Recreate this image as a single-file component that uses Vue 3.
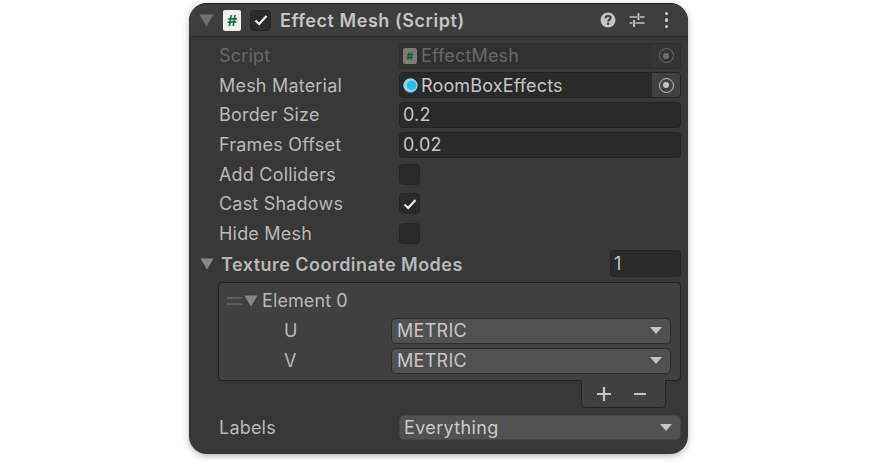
<script setup>
const checks = [
  { label: 'Add Colliders', checked: false },
  { label: 'Cast Shadows', checked: true },
  { label: 'Hide Mesh', checked: false }
]
</script>

<template>
  <div class="page">
    <div class="panel">
      <div class="header">
        <svg class="fold head-fold" width="15" height="13" viewBox="0 0 15 13"><path d="M0.5 0.5H14.5L7.5 12.5Z" fill="#6f6f6f"/></svg>
        <div class="script-icon"><span>#</span></div>
        <div class="check head-check">
          <svg width="16" height="14" viewBox="0 0 16 14"><path d="M2.5 7.5L6.2 11L13.5 3" fill="none" stroke="#f0f0f0" stroke-width="2.2"/></svg>
        </div>
        <div class="title">Effect Mesh (Script)</div>
        <svg class="help" width="16" height="16" viewBox="0 0 16 16">
          <circle cx="8" cy="8" r="7.5" fill="#c4c4c4"/>
          <path d="M5.4 6.2C5.5 4.6 6.6 3.9 8 3.9C9.5 3.9 10.6 4.7 10.6 6C10.6 7.6 8.2 7.7 8.2 9.4" fill="none" stroke="#3e3e3e" stroke-width="2"/>
          <rect x="7" y="10.6" width="2.2" height="2.2" fill="#3e3e3e"/>
        </svg>
        <svg class="sliders" width="16" height="16" viewBox="0 0 16 16">
          <path d="M0.5 5H8M11 5H15.5M0.5 11H3.5M6.5 11H15.5" stroke="#c4c4c4" stroke-width="1.4"/>
          <path d="M9.5 1V8M5 8V15" stroke="#c4c4c4" stroke-width="1.8"/>
        </svg>
        <div class="dots"><i></i><i></i><i></i></div>
      </div>

      <div class="body">
        <div class="row dim">
          <div class="label">Script</div>
          <div class="field obj disabled">
            <div class="mini-script"><span>#</span></div>
            <span class="value">EffectMesh</span>
            <div class="picker"><div class="target"></div></div>
          </div>
        </div>
        <div class="row">
          <div class="label">Mesh Material</div>
          <div class="field obj">
            <svg class="material" width="15" height="15" viewBox="0 0 15 15">
              <circle cx="7.5" cy="7.5" r="7.2" fill="#9fd0e2"/>
              <circle cx="8.6" cy="7.2" r="4.8" fill="#1fc3ee"/>
              <path d="M1.4 10.5A7 7 0 0 0 13.6 10.5A6.4 6.4 0 0 1 1.4 10.5Z" fill="#2a7ea3"/>
            </svg>
            <span class="value">RoomBoxEffects</span>
            <div class="picker active"><div class="target"></div></div>
          </div>
        </div>
        <div class="row">
          <div class="label">Border Size</div>
          <div class="field"><span class="value">0.2</span></div>
        </div>
        <div class="row">
          <div class="label">Frames Offset</div>
          <div class="field"><span class="value">0.02</span></div>
        </div>
        <div v-for="c in checks" :key="c.label" class="row">
          <div class="label">{{ c.label }}</div>
          <div class="check">
            <svg v-if="c.checked" width="16" height="14" viewBox="0 0 16 14"><path d="M2.5 7.5L6.2 11L13.5 3" fill="none" stroke="#f0f0f0" stroke-width="2.2"/></svg>
          </div>
        </div>

        <div class="row array-head">
          <svg class="fold" width="14" height="12" viewBox="0 0 14 12"><path d="M0.5 0.5H13.5L7 11.5Z" fill="#888"/></svg>
          <div class="array-title">Texture Coordinate Modes</div>
          <div class="field count"><span class="value">1</span></div>
        </div>

        <div class="list">
          <div class="element">
            <div class="grip"><i></i><i></i></div>
            <svg class="fold" width="14" height="12" viewBox="0 0 14 12"><path d="M0.5 0.5H13.5L7 11.5Z" fill="#888"/></svg>
            <span class="element-name">Element 0</span>
          </div>
          <div class="sub-row">
            <span class="sub-label">U</span>
            <div class="dropdown"><span>METRIC</span><b class="caret"></b></div>
          </div>
          <div class="sub-row">
            <span class="sub-label">V</span>
            <div class="dropdown"><span>METRIC</span><b class="caret"></b></div>
          </div>
        </div>
        <div class="footer-wrap">
          <div class="footer">
            <svg width="16" height="16" viewBox="0 0 16 16"><path d="M8 1V15M1 8H15" stroke="#c4c4c4" stroke-width="2.2"/></svg>
            <svg width="14" height="16" viewBox="0 0 14 16"><path d="M1 8H13" stroke="#c4c4c4" stroke-width="2.2"/></svg>
          </div>
        </div>

        <div class="row labels-row">
          <div class="label">Labels</div>
          <div class="dropdown wide"><span>Everything</span><b class="caret"></b></div>
        </div>
      </div>
    </div>
  </div>
</template>

<style>
html, body { background: #fff; }
</style>

<style scoped>
.page {
  width: 876px;
  height: 464px;
  padding: 3px 0 0 189px;
  box-sizing: border-box;
  font-family: Inter, "Liberation Sans", sans-serif;
  overflow: hidden;
}
.panel {
  width: 499px;
  height: 451px;
  background: #383838;
  border-radius: 18px;
  border-top: 1px solid #1e1e1e;
  box-sizing: border-box;
  box-shadow: 0 2px 6px rgba(0, 0, 0, 0.3);
  overflow: hidden;
}
.header {
  height: 32px;
  background: #3e3e3e;
  border-bottom: 1px solid #303030;
  display: flex;
  align-items: center;
  padding-left: 10px;
  color: #c4c4c4;
}
.head-fold { margin-right: 9px; }
.script-icon {
  width: 18px;
  height: 21px;
  background: #eeeeee;
  border-radius: 2px;
  display: flex;
  align-items: center;
  justify-content: center;
  color: #1b7a3d;
  font-size: 15px;
  font-weight: 700;
  margin-right: 9px;
}
.head-check { margin-right: 9px; }
.title {
  font-size: 18px;
  font-weight: 600;
  letter-spacing: 0.55px;
  flex: 1;
}
.help { margin-right: 13px; }
.sliders { margin-right: 20px; }
.dots {
  display: flex;
  flex-direction: column;
  gap: 3px;
  margin-right: 20px;
}
.dots i {
  width: 3.5px;
  height: 3.5px;
  border-radius: 50%;
  background: #c8c8c8;
}
.body {
  padding: 4px 7px 0 11px;
}
.row {
  height: 29.6px;
  display: flex;
  align-items: center;
}
.label {
  width: 180px;
  margin-left: 19px;
  font-size: 18px;
  letter-spacing: 0.2px;
  color: #b8b8b8;
  flex-shrink: 0;
}
.dim .label { color: #676767; }
.field {
  flex: 1;
  height: 26px;
  background: #2a2a2a;
  border: 1px solid #232323;
  border-radius: 4px;
  box-sizing: border-box;
  display: flex;
  align-items: center;
  padding-left: 3px;
  color: #c4c4c4;
  font-size: 18px;
  letter-spacing: 0.15px;
}
.field .value { flex: 1; }
.obj { padding-right: 0; overflow: hidden; }
.disabled {
  background: #313131;
  border-color: #2e2e2e;
  color: #686868;
}
.mini-script {
  width: 14px;
  height: 16px;
  background: #7c7c7c;
  border-radius: 2px;
  display: flex;
  align-items: center;
  justify-content: center;
  color: #1e5a34;
  font-size: 11px;
  font-weight: 700;
  margin-right: 4px;
}
.material {
  margin-right: 3px;
  flex-shrink: 0;
}
.picker {
  width: 28px;
  height: 100%;
  display: flex;
  align-items: center;
  justify-content: center;
  background: #353535;
}
.picker.active { background: #414141; }
.target {
  width: 15px;
  height: 15px;
  border: 1.5px solid #6f6f6f;
  border-radius: 50%;
  box-sizing: border-box;
  position: relative;
}
.target::after {
  content: '';
  position: absolute;
  inset: 3.5px;
  border-radius: 50%;
  background: #6f6f6f;
}
.active .target { border-color: #c4c4c4; }
.active .target::after { background: #c4c4c4; }
.check {
  width: 21px;
  height: 21px;
  background: #2a2a2a;
  border: 1px solid #252525;
  border-radius: 4px;
  box-sizing: border-box;
  display: flex;
  align-items: center;
  justify-content: center;
  flex-shrink: 0;
}
.array-head .fold { margin: 0 7px 0 0; flex-shrink: 0; }
.array-head { height: 31px; }
.array-title {
  flex: 1;
  padding-top: 2px;
  font-size: 18px;
  font-weight: 600;
  letter-spacing: 0.47px;
  color: #b8b8b8;
}
.count { flex: 0 0 71px; height: 27px; }
.list {
  margin: 3px 0 0 18px;
  height: 99px;
  box-sizing: border-box;
  background: #414141;
  border: 1px solid #232323;
  border-radius: 4px;
  padding-top: 3px;
}
.element {
  height: 30px;
  display: flex;
  align-items: center;
  padding: 0 0 1px 8px;
  box-sizing: border-box;
  color: #b8b8b8;
  font-size: 18px;
  letter-spacing: 0.1px;
}
.grip {
  display: flex;
  flex-direction: column;
  gap: 4px;
  margin-right: 2px;
}
.grip i {
  width: 15px;
  height: 2px;
  background: #5e5e5e;
}
.element .fold { margin-right: 4px; }
.sub-row {
  height: 29.6px;
  display: flex;
  align-items: center;
  color: #b8b8b8;
  font-size: 18px;
}
.sub-label {
  width: 172px;
  padding-left: 65px;
  box-sizing: border-box;
}
.dropdown {
  flex: 1;
  height: 26px;
  margin-right: 9px;
  background: #515151;
  border: 1px solid #2e2e2e;
  border-radius: 5px;
  box-sizing: border-box;
  display: flex;
  align-items: center;
  justify-content: space-between;
  padding: 0 8px 0 5px;
  color: #c8c8c8;
  font-size: 18px;
  letter-spacing: 0.3px;
}
.caret {
  width: 0;
  height: 0;
  border-left: 6.5px solid transparent;
  border-right: 6.5px solid transparent;
  border-top: 7px solid #c4c4c4;
}
.footer-wrap {
  display: flex;
  justify-content: flex-end;
  padding-right: 15px;
}
.footer {
  width: 85px;
  height: 28px;
  margin-top: -1px;
  padding-right: 4px;
  background: #414141;
  border: 1px solid #232323;
  border-top: none;
  border-radius: 0 0 5px 5px;
  box-sizing: border-box;
  display: flex;
  align-items: center;
  justify-content: center;
  gap: 21px;
}
.labels-row {
  margin-top: 5px;
}
.dropdown.wide {
  margin-right: 0;
  height: 25px;
  border-color: #454545;
  letter-spacing: 0.35px;
  padding-left: 4px;
}
</style>
